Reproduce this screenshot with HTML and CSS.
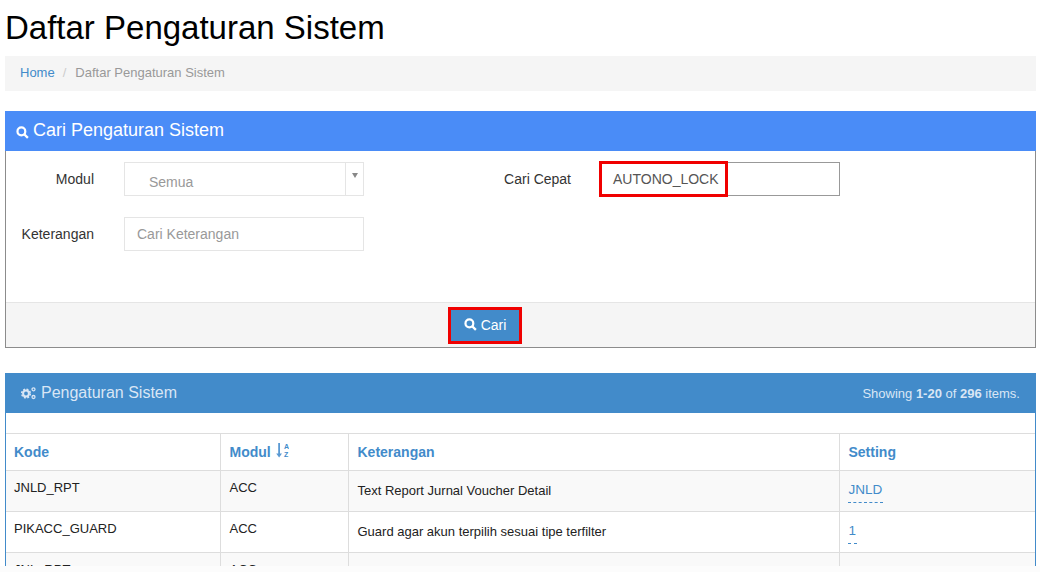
FILE: index.html
```html
<!DOCTYPE html>
<html lang="id">
<head>
<meta charset="utf-8">
<title>Daftar Pengaturan Sistem</title>
<link rel="stylesheet" href="styles.css">
</head>
<body>
<main class="page">
  <h1 class="title">Daftar Pengaturan Sistem</h1>
  <nav class="breadcrumb"><a class="crumb-link">Home</a><span class="crumb-sep">/</span><span class="crumb-current">Daftar Pengaturan Sistem</span></nav>

  <section class="panel panel-search">
    <header class="search-head">
      <svg class="icon-search-sm" viewBox="0 0 14 14"><circle cx="5.800" cy="5.800" r="4.200"/><path d="M9 9l3.800 3.800"/></svg>
      <span>Cari Pengaturan Sistem</span>
    </header>
    <div class="search-body">
      <div class="form-col">
        <div class="field">
          <label class="field-label">Modul</label>
          <div class="select"><span class="select-text">Semua</span><span class="select-arrow"><i class="caret"></i></span></div>
        </div>
        <div class="field">
          <label class="field-label">Keterangan</label>
          <div class="input placeholder">Cari Keterangan</div>
        </div>
      </div>
      <div class="field field-quick">
        <label class="field-label label-quick">Cari Cepat</label>
        <div class="input input-quick">AUTONO_LOCK<span class="mark mark-quick"></span></div>
      </div>
    </div>
    <footer class="search-foot">
      <button class="btn" type="button">
        <svg class="icon-search-btn" viewBox="0 0 14 14"><circle cx="5.800" cy="5.800" r="4.200"/><path d="M9 9l3.800 3.800"/></svg>Cari
        <span class="mark mark-btn"></span>
      </button>
    </footer>
  </section>

  <section class="panel panel-list">
    <header class="list-head">
      <div class="list-title">
        <svg class="icon-cogs" viewBox="0 0 15 14"><circle class="cog-ring" cx="5" cy="7.500" r="2.900"/><circle class="cog-teeth" cx="5" cy="7.500" r="4.300"/><circle class="cog-small" cx="12.500" cy="3.300" r="1.500"/><circle class="cog-small" cx="12.500" cy="11" r="1.500"/></svg>
        <span>Pengaturan Sistem</span>
      </div>
      <div class="summary">Showing <b>1-20</b> of <b>296</b> items.</div>
    </header>
    <div class="table-wrap">
      <table class="grid">
        <colgroup><col class="col-kode"><col class="col-modul"><col class="col-ket"><col></colgroup>
        <thead>
          <tr>
            <th>Kode</th>
            <th><span class="th-sort">Modul <svg class="icon-sort" viewBox="0 0 13 15"><path class="sort-arrow" d="M2.200 0h1.800v10.500h2L3.100 14.500.2 10.500h2z"/><text x="8" y="6">A</text><text x="8" y="14">Z</text></svg></span></th>
            <th>Keterangan</th>
            <th>Setting</th>
          </tr>
        </thead>
        <tbody>
          <tr class="odd"><td>JNLD_RPT</td><td>ACC</td><td class="ket">Text Report Jurnal Voucher Detail</td><td class="set"><a class="editable">JNLD</a></td></tr>
          <tr><td>PIKACC_GUARD</td><td>ACC</td><td class="ket">Guard agar akun terpilih sesuai tipe terfilter</td><td class="set"><a class="editable">1</a></td></tr>
          <tr class="odd"><td>JNL_RPT</td><td>ACC</td><td class="ket"></td><td class="set"></td></tr>
        </tbody>
      </table>
    </div>
  </section>
</main>
<div class="bottom-fade"></div>
</body>
</html>
```
FILE: styles.css
```css
* { box-sizing: border-box; }
html, body { margin: 0; height: 572px; overflow: hidden; background: #fff; }
body { font-family: "Liberation Sans", Arial, sans-serif; font-size: 14px; color: #333; position: relative; }
.page { padding: 0 4px 0 5px; }

.title { margin: 0; padding-top: 9px; height: 56px; font-size: 33px; line-height: 37px; font-weight: 400; color: #000; }

.breadcrumb { height: 35px; margin-bottom: 20px; padding: 0 15px 3px; display: flex; align-items: center; background: #f5f5f5; font-size: 13px; }
.crumb-link { color: #428bca; }
.crumb-sep { color: #ccc; padding: 0 9px 0 8px; }
.crumb-current { color: #999; }

.panel { border: 1px solid #4a8cf7; }
.panel-search { height: 237px; margin-bottom: 25px; border-color: #8c8c8c; border-top: 0; display: flex; flex-direction: column; }
.search-head { margin: 0 -1px; height: 40px; padding: 0 11px 2px; display: flex; align-items: center; background: #4a8cf7; color: #fff; font-size: 18px; }
.icon-search-sm { width: 13px; height: 13px; margin-right: 4px; margin-top: 5px; fill: none; stroke: #fff; stroke-width: 2.400; }

.search-body { flex: 1; display: flex; padding-top: 11px; }
.form-col { width: 358px; display: flex; flex-direction: column; gap: 21px; }
.field { display: flex; align-items: center; }
.field-label { width: 88px; margin-right: 30px; text-align: right; color: #333; margin-top: -1px; }
.select, .input { width: 240px; height: 34px; border: 1px solid #e5e5e5; background: #fff; display: flex; align-items: center; }
.select { color: #999; }
.select-text { flex: 1; padding: 5px 0 0 24px; }
.select-arrow { width: 18px; height: 100%; border-left: 1px solid #e5e5e5; display: flex; justify-content: center; padding-top: 10px; }
.caret { width: 0; height: 0; border: 3px solid transparent; border-top: 5px solid #888; border-bottom: 0; }
.placeholder { padding-left: 12px; color: #999; }
.field-quick { align-self: flex-start; }
.label-quick { width: 207px; margin-right: 29px; }
.input-quick { position: relative; border-color: #999; color: #555; padding-left: 12px; }
.mark { position: absolute; border: 3px solid #f00000; pointer-events: none; }
.mark-quick { left: -2px; top: -2px; width: 129px; height: 36px; }

.search-foot { height: 45px; border-top: 1px solid #e5e5e5; background: #f5f5f5; display: flex; align-items: flex-start; padding: 4px 0 0 442px; }
.btn { position: relative; width: 74px; height: 37px; padding: 0 0 2px; border: 0; background: #428bca; color: #fff; font: 14px "Liberation Sans", Arial, sans-serif; display: flex; align-items: center; justify-content: center; }
.icon-search-btn { width: 13px; height: 13px; margin-right: 4px; fill: none; stroke: #fff; stroke-width: 2.400; }
.mark-btn { inset: 0; }

.panel-list { border-color: #428bca; border-top: 0; height: 210px; }
.list-head { margin: 0 -1px; height: 40px; padding: 0 16px; display: flex; align-items: center; justify-content: space-between; background: #428bca; color: #d9e6f5; }
.list-title { display: flex; align-items: center; font-size: 16px; }
.icon-cogs { width: 15px; height: 14px; margin-right: 5px; fill: none; stroke: #d9e6f5; }
.cog-ring { stroke-width: 2; }
.cog-teeth { stroke-width: 1.600; stroke-dasharray: 1.900 1.480; }
.cog-small { stroke-width: 1.300; }
.summary { font-size: 13px; }

.table-wrap { padding-top: 20px; }
.grid { width: 100%; border-collapse: collapse; table-layout: fixed; font-size: 13px; }
.col-kode { width: 214px; }
.col-modul { width: 128px; }
.col-ket { width: 491px; }
.grid th, .grid td { border: 1px solid #ddd; vertical-align: top; text-align: left; padding-left: 9px; padding-right: 8px; }
.grid tr > :first-child { border-left: 0; padding-left: 8px; }
.grid tr > :last-child { border-right: 0; }
.grid th { height: 37px; padding-top: 10px; color: #428bca; font-size: 14px; font-weight: 700; }
.grid td { height: 41px; padding-top: 9px; color: #222; }
.odd td { background: #f9f9f9; }
.grid td.ket { font-size: 13px; padding-top: 12px; }
.grid td.set { padding-top: 11px; }
.editable { color: #428bca; border-bottom: 1px dashed #428bca; padding: 0 1px 5px 1px; margin-left: -1px; display: inline-block; line-height: 15px; font-size: 13.500px; }
.th-sort { position: relative; padding-right: 18px; }
.icon-sort { position: absolute; right: 0; top: -1px; width: 13px; height: 15px; }
.sort-arrow { fill: #5a9ad3; }
.icon-sort text { font: 700 7px "Liberation Sans", Arial, sans-serif; fill: #428bca; }

.bottom-fade { position: absolute; left: 0; right: 0; top: 566px; height: 6px; background: #fcfcfc; }
```
